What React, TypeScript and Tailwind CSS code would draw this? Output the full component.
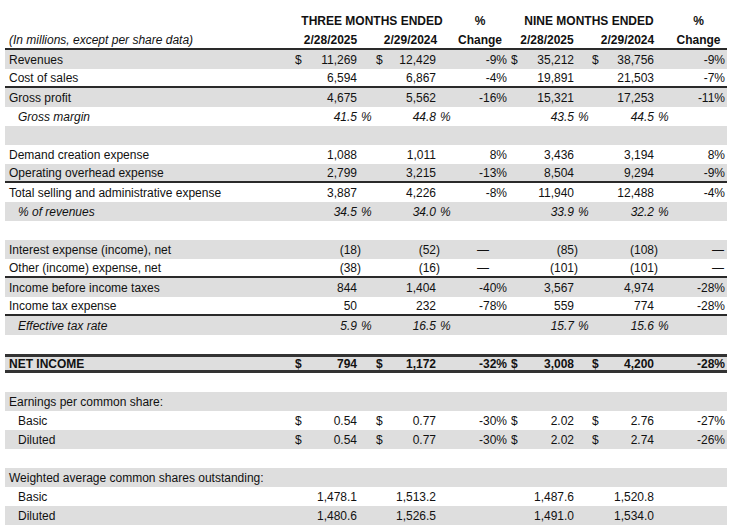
import React from 'react';

type Row = {
  label?: string;
  kind?: 'pct' | 'blank' | 'net';
  indent?: boolean;
  italic?: boolean;
  dollars?: boolean;
  line?: boolean;
  v?: string[];
};

const rows: Row[] = [
  { label: 'Revenues', dollars: true, v: ['11,269', '12,429', '-9%', '35,212', '38,756', '-9%'] },
  { label: 'Cost of sales', line: true, v: ['6,594', '6,867', '-4%', '19,891', '21,503', '-7%'] },
  { label: 'Gross profit', v: ['4,675', '5,562', '-16%', '15,321', '17,253', '-11%'] },
  { label: 'Gross margin', kind: 'pct', indent: true, italic: true, v: ['41.5', '44.8', '43.5', '44.5'] },
  { kind: 'blank' },
  { label: 'Demand creation expense', v: ['1,088', '1,011', '8%', '3,436', '3,194', '8%'] },
  { label: 'Operating overhead expense', line: true, v: ['2,799', '3,215', '-13%', '8,504', '9,294', '-9%'] },
  { label: 'Total selling and administrative expense', v: ['3,887', '4,226', '-8%', '11,940', '12,488', '-4%'] },
  { label: '% of revenues', kind: 'pct', indent: true, italic: true, v: ['34.5', '34.0', '33.9', '32.2'] },
  { kind: 'blank' },
  { label: 'Interest expense (income), net', v: ['(18)', '(52)', '—', '(85)', '(108)', '—'] },
  { label: 'Other (income) expense, net', line: true, v: ['(38)', '(16)', '—', '(101)', '(101)', '—'] },
  { label: 'Income before income taxes', v: ['844', '1,404', '-40%', '3,567', '4,974', '-28%'] },
  { label: 'Income tax expense', line: true, v: ['50', '232', '-78%', '559', '774', '-28%'] },
  { label: 'Effective tax rate', kind: 'pct', indent: true, italic: true, v: ['5.9', '16.5', '15.7', '15.6'] },
  { kind: 'blank' },
  { label: 'NET INCOME', kind: 'net', dollars: true, v: ['794', '1,172', '-32%', '3,008', '4,200', '-28%'] },
  { kind: 'blank' },
  { label: 'Earnings per common share:' },
  { label: 'Basic', indent: true, dollars: true, v: ['0.54', '0.77', '-30%', '2.02', '2.76', '-27%'] },
  { label: 'Diluted', indent: true, dollars: true, v: ['0.54', '0.77', '-30%', '2.02', '2.74', '-26%'] },
  { kind: 'blank' },
  { label: 'Weighted average common shares outstanding:' },
  { label: 'Basic', indent: true, v: ['1,478.1', '1,513.2', '', '1,487.6', '1,520.8', ''] },
  { label: 'Diluted', indent: true, v: ['1,480.6', '1,526.5', '', '1,491.0', '1,534.0', ''] },
];

const cols =
  'grid grid-cols-[287px_12px_53px_16px_12px_51px_16px_56px_12px_54px_15px_12px_53px_16px_57px] items-center';

function Num({ s }: { s: string }) {
  if (s.startsWith('(')) return <span className="-mr-1">{s}</span>;
  return <span>{s}</span>;
}

function Dollar({ on }: { on?: boolean }) {
  return <div className="pl-[3px]">{on ? '$' : ''}</div>;
}

function Chg({ s, first }: { s: string; first?: boolean }) {
  if (s === '—') {
    return <div className={`text-right ${first ? 'pr-[19px]' : 'pr-[3px]'}`}>—</div>;
  }
  return <div className={`text-right ${first ? 'pr-[1px]' : 'pr-[2px]'}`}>{s}</div>;
}

function TableRow({ row, i }: { row: Row; i: number }) {
  const bg = i % 2 === 0 ? 'bg-[#dedede]' : 'bg-white';
  let border = '';
  if (row.line) border = 'border-b-2 border-[#2a2a2a]';
  if (row.kind === 'net') border = 'border-y-[3px] border-[#333]';
  const weight = row.kind === 'net' ? 'font-bold' : '';
  const label = (
    <div
      className={`whitespace-nowrap ${row.indent ? 'pl-[13px]' : 'pl-[4px]'} ${row.italic ? 'italic' : ''}`}
    >
      {row.label}
    </div>
  );

  if (row.kind === 'blank' || !row.v) {
    return (
      <div className={`${cols} h-[19px] ${bg} ${border}`}>
        {row.label ? label : <div />}
      </div>
    );
  }

  if (row.kind === 'pct') {
    const [a, b, c, d] = row.v;
    return (
      <div className={`${cols} h-[19px] ${bg} ${border} italic`}>
        {label}
        <div />
        <div className="text-right">{a}</div>
        <div className="pl-[4px] whitespace-nowrap">%</div>
        <div />
        <div className="text-right">{b}</div>
        <div className="pl-[4px] whitespace-nowrap">%</div>
        <div />
        <div />
        <div className="text-right">{c}</div>
        <div className="pl-[4px] whitespace-nowrap">%</div>
        <div />
        <div className="text-right">{d}</div>
        <div className="pl-[4px] whitespace-nowrap">%</div>
        <div />
      </div>
    );
  }

  const [a, b, ca, c, d, cb] = row.v;
  return (
    <div className={`${cols} h-[19px] ${bg} ${border} ${weight}`}>
      {label}
      <Dollar on={row.dollars} />
      <div className="text-right"><Num s={a} /></div>
      <div />
      <Dollar on={row.dollars} />
      <div className="text-right"><Num s={b} /></div>
      <div />
      <Chg s={ca} first />
      <Dollar on={row.dollars} />
      <div className="text-right"><Num s={c} /></div>
      <div />
      <Dollar on={row.dollars} />
      <div className="text-right"><Num s={d} /></div>
      <div />
      <Chg s={cb} />
    </div>
  );
}

export default function App() {
  return (
    <div className="w-[740px] h-[531px] bg-white text-[#111] text-[12px] leading-[14px] font-['Liberation_Sans',Arial,sans-serif] overflow-hidden">
      <div className="ml-[5px] w-[722px] pt-[10px]">
        <div className={`${cols} h-[21px] font-bold`}>
          <div />
          <div className="col-span-6 flex justify-center whitespace-nowrap">THREE MONTHS ENDED</div>
          <div className="flex justify-center">%</div>
          <div className="col-span-6 flex justify-center whitespace-nowrap">NINE MONTHS ENDED</div>
          <div className="flex justify-center">%</div>
        </div>
        <div className={`${cols} h-[19px] border-b-2 border-[#2a2a2a] font-bold`}>
          <div className="pl-[4px] italic font-normal whitespace-nowrap">
            (In millions, except per share data)
          </div>
          <div />
          <div className="flex justify-center whitespace-nowrap">2/28/2025</div>
          <div />
          <div />
          <div className="flex justify-center whitespace-nowrap">2/29/2024</div>
          <div />
          <div className="flex justify-center">Change</div>
          <div />
          <div className="flex justify-center whitespace-nowrap">2/28/2025</div>
          <div />
          <div />
          <div className="flex justify-center whitespace-nowrap">2/29/2024</div>
          <div />
          <div className="flex justify-center">Change</div>
        </div>
        {rows.map((r, i) => (
          <TableRow key={i} row={r} i={i} />
        ))}
      </div>
    </div>
  );
}
